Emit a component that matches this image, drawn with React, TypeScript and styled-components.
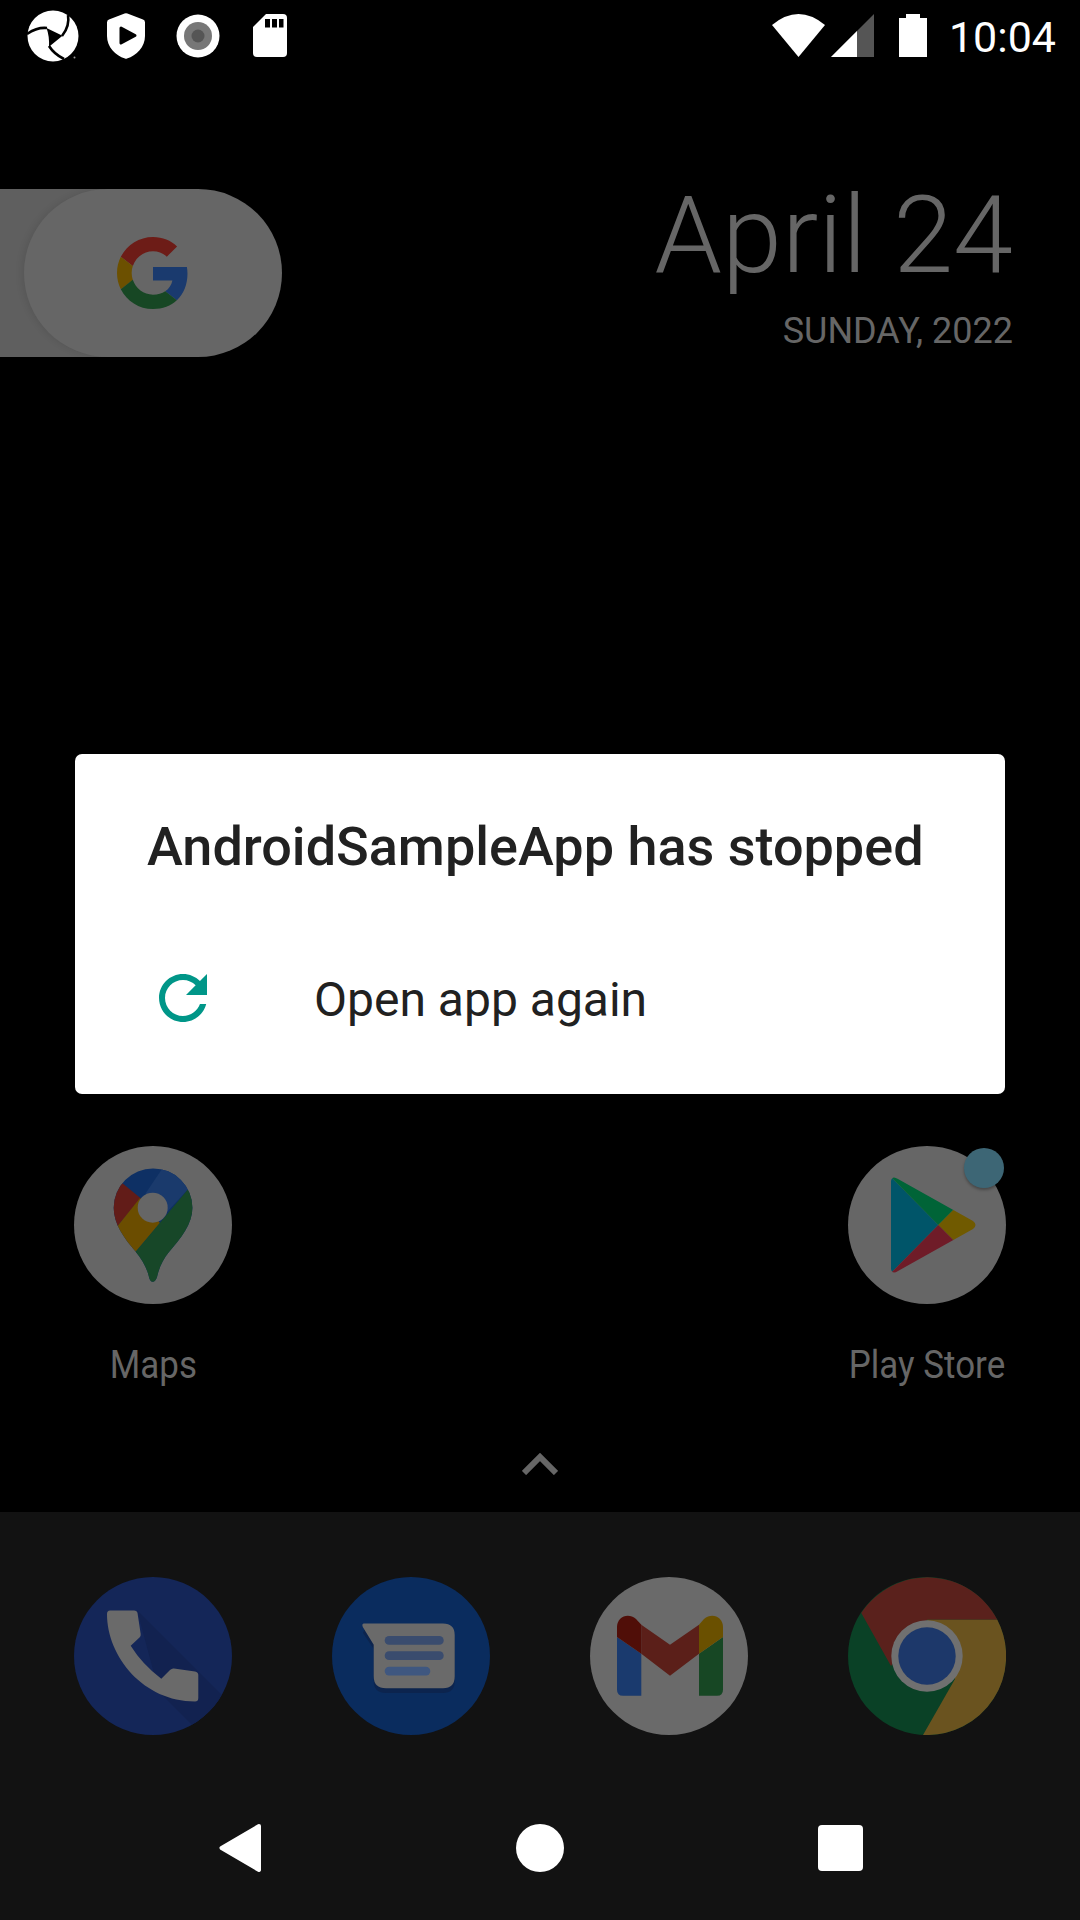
import * as React from 'react'
import styled, { createGlobalStyle } from 'styled-components'

const GlobalStyle = createGlobalStyle`
  html, body {
    margin: 0;
    padding: 0;
    background: #000;
  }
  * {
    box-sizing: border-box;
  }
`

const Page = styled.div`
  position: relative;
  width: 1080px;
  height: 1920px;
  display: flex;
  flex-direction: column;
  overflow: hidden;
  background: #000;
  font-family: Roboto, "Liberation Sans", sans-serif;
`

const StatusBar = styled.div`
  height: 71px;
  flex: none;
  display: flex;
  align-items: center;
  justify-content: space-between;
  padding: 0 24px 0 18px;
`

const StatusLeft = styled.div`
  display: flex;
  align-items: center;
`

const StatusSlot = styled.div`
  width: 72px;
  display: flex;
  justify-content: center;
  align-items: center;
`

const StatusRight = styled.div`
  display: flex;
  align-items: center;
  gap: 25px;
`

const Radios = styled.div`
  display: flex;
  align-items: center;
  gap: 6px;
`

const Clock = styled.div`
  color: #fff;
  font-size: 43px;
  line-height: 48px;
  margin: 3px 0 0 -3px;
`

const Home = styled.div`
  flex: 1;
  display: flex;
  flex-direction: column;
  min-height: 0;
`

const SearchRow = styled.div`
  margin-top: 118px;
  height: 168px;
  display: flex;
  justify-content: space-between;
  padding: 0 67px 0 24px;
  position: relative;
`

const SearchPill = styled.div`
  position: relative;
  width: 258px;
  height: 168px;
  display: flex;
  align-items: center;
  justify-content: center;
  border-radius: 84px;
  background: #666;
  box-shadow: -3px 0 6px rgba(0, 0, 0, 0.08);

  &::before {
    content: '';
    position: absolute;
    z-index: -1;
    left: -24px;
    top: 0;
    bottom: 0;
    width: 153px;
    background: #5f5f5f;
  }
`

const SearchSurface = styled.div`
  position: relative;
  z-index: 0;
`

const DateBlock = styled.div`
  display: flex;
  flex-direction: column;
  align-items: flex-end;
  margin-top: -8px;
  color: #666;
`

const DateMain = styled.div`
  font-size: 108px;
  line-height: 108px;
  font-weight: 300;
`

const DateSub = styled.div`
  font-size: 36px;
  line-height: 40px;
  margin-top: 22px;
`

const AppGrid = styled.div`
  margin-top: auto;
  display: grid;
  grid-template-columns: repeat(4, 258px);
  padding: 0 24px;
`

const AppCell = styled.div<{ $col: number }>`
  grid-column: ${(p) => p.$col};
  display: flex;
  flex-direction: column;
  align-items: center;
`

const AppLabel = styled.div`
  margin-top: 39px;
  font-size: 38px;
  line-height: 44px;
  color: #666;
  white-space: nowrap;
  transform: scaleX(0.92);
`

const Badged = styled.div`
  position: relative;
  width: 158px;
  height: 158px;
`

const Badge = styled.div`
  position: absolute;
  right: 2px;
  top: 2px;
  width: 40px;
  height: 40px;
  border-radius: 50%;
  background: #3d6675;
  box-shadow: 0 2px 3px rgba(0, 0, 0, 0.3);
`

const DrawerHint = styled.div`
  margin: 66px 0 38px;
  height: 21px;
  display: flex;
  justify-content: center;
`

const Dock = styled.div`
  flex: none;
  background: #121212;
  padding-top: 65px;
`

const DockRow = styled.div`
  display: grid;
  grid-template-columns: repeat(4, 258px);
  justify-items: center;
  padding: 0 24px 41px;
`

const NavBar = styled.div`
  height: 144px;
  display: grid;
  grid-template-columns: repeat(3, 300px);
  justify-items: center;
  align-items: center;
  padding: 0 90px;
`

const DialogLayer = styled.div`
  position: absolute;
  inset: 0 0 72px 0;
  display: flex;
  align-items: center;
  justify-content: center;
`

const Dialog = styled.div`
  width: 930px;
  height: 340px;
  background: #fff;
  border-radius: 7px;
  padding: 61px 72px 0;
  color: #212121;
`

const DialogTitle = styled.div`
  font-size: 54px;
  line-height: 64px;
  font-weight: 500;
  white-space: nowrap;
`

const DialogAction = styled.div`
  margin-top: 83px;
  height: 72px;
  display: flex;
  align-items: center;
  gap: 95px;
`

const ActionLabel = styled.div`
  font-size: 48px;
  line-height: 54px;
  margin-top: 3px;
`

const Icon = styled.svg`
  display: block;
  flex: none;
`

const ShutterLogo = () => (
  <Icon width="54" height="52" viewBox="0 0 54 52">
    <circle cx="26" cy="26" r="25.5" fill="#fff" />
    <path d="M19.5 18 L35.5 25.7 L22 36.8 Q22.5 26 19.5 18Z" fill="#000" />
    <path d="M41 5 Q43 16 35 26" fill="none" stroke="#000" strokeWidth="2.6" />
    <path d="M0 24 Q10 17 20 18" fill="none" stroke="#000" strokeWidth="2.6" />
    <path d="M22 36 Q27 44 37 49" fill="none" stroke="#000" strokeWidth="2.6" />
    <circle cx="47.5" cy="47.5" r="1" fill="#999" />
  </Icon>
)

const ShieldPlay = () => (
  <Icon width="38" height="46" viewBox="0 0 38 46">
    <path d="M17.6.6 Q19 0 20.4.6 L36 6.6 Q38 7.4 38 9.4 V23 C38 34 29.5 42.5 20 45.6 Q19 46 18 45.6 C8.5 42.5 0 34 0 23 V9.4 Q0 7.4 2 6.6Z" fill="#fff" />
    <path d="M14 15 L28 22.5 L14 30Z" fill="#000" stroke="#000" strokeWidth="3" strokeLinejoin="round" />
  </Icon>
)

const RecordDot = () => (
  <Icon width="44" height="44" viewBox="0 0 44 44">
    <circle cx="22" cy="22" r="21.5" fill="#fff" />
    <circle cx="22" cy="22" r="14" fill="#777" />
    <circle cx="22" cy="22" r="6.5" fill="#555" />
  </Icon>
)

const SdCard = () => (
  <Icon width="36" height="44" viewBox="0 0 36 44">
    <path d="M14 0 H31 Q35 0 35 4 V39 Q35 43 31 43 H5 Q1 43 1 39 V13Z" fill="#fff" />
    <path d="M13 5 H18 V13.5 H13Z M20 5 H25 V13.5 H20Z M27 5 H31.5 V13.5 H27Z" fill="#000" />
  </Icon>
)

const WifiIcon = () => (
  <Icon width="53" height="43" viewBox="0 0 53 43">
    <path d="M0 11 Q26.5 -11 53 11 L26.5 43Z" fill="#fff" />
  </Icon>
)

const SignalIcon = () => (
  <Icon width="43" height="43" viewBox="0 0 43 43">
    <path d="M0 43 L43 0 V43Z" fill="#555" />
    <path d="M0 43 L26 17 V43Z" fill="#fff" />
  </Icon>
)

const BatteryIcon = () => (
  <Icon width="28" height="43" viewBox="0 0 28 43">
    <path d="M7 0 H21 V4 H28 V43 H0 V4 H7Z" fill="#fff" />
  </Icon>
)

const GoogleG = () => (
  <Icon width="72" height="72" viewBox="0 0 48 48">
    <path fill="#6d1c17" d="M24 9.5c3.54 0 6.71 1.22 9.21 3.6l6.85-6.85C35.9 2.38 30.47 0 24 0 14.62 0 6.51 5.38 2.56 13.22l7.98 6.19C12.43 13.72 17.74 9.5 24 9.5z" />
    <path fill="#1a3a6e" d="M46.98 24.55c0-1.57-.15-3.09-.38-4.55H24v9.02h12.94c-.58 2.96-2.26 5.48-4.78 7.18l7.73 6c4.51-4.18 7.09-10.36 7.09-17.65z" />
    <path fill="#6c5000" d="M10.53 28.59c-.48-1.45-.76-2.99-.76-4.59s.27-3.14.76-4.59l-7.98-6.19C.92 16.46 0 20.12 0 24c0 3.88.92 7.54 2.56 10.78l7.97-6.19z" />
    <path fill="#174724" d="M24 48c6.48 0 11.93-2.13 15.89-5.81l-7.73-6c-2.15 1.45-4.92 2.3-8.16 2.3-6.26 0-11.57-4.22-13.47-9.91l-7.98 6.19C6.51 42.62 14.62 48 24 48z" />
  </Icon>
)

const MapsIcon = () => (
  <Icon width="158" height="158" viewBox="0 0 158 158">
    <defs>
      <clipPath id="pin">
        <path d="M79 22.4 A39.3 39.3 0 0 1 118.4 61.7 C118.4 78 107 92 95 106 C89 113 85 122 83 131 Q81.5 135.7 78.7 135.7 Q76 135.7 75 131 C73 122 68 113 61.7 105.7 C50 92 39.7 78 39.7 61.7 A39.3 39.3 0 0 1 79 22.4Z" />
      </clipPath>
    </defs>
    <circle cx="79" cy="79" r="79" fill="#666" />
    <g clipPath="url(#pin)">
      <rect x="30" y="15" width="100" height="130" fill="#0e3064" />
      <path d="M90 20 L130 20 L130 44 L113.4 44 L80 80 L71.7 47.3Z" fill="#1a3a6c" />
      <path d="M48.4 37.3 L66.7 52.3 L43 80.7 L30 70 L30 30Z" fill="#621c18" />
      <path d="M43 80.7 L66 52 L86 77 L61.7 105.7 L40 90Z" fill="#6b4d00" />
      <path d="M61.7 105.7 L113.4 44 L130 44 L130 145 L60 145Z" fill="#174728" />
    </g>
    <circle cx="78.7" cy="61.7" r="15" fill="#666" />
  </Icon>
)

const PlayIcon = () => (
  <Icon width="158" height="158" viewBox="0 0 158 158">
    <defs>
      <clipPath id="play">
        <path d="M43 35 Q44 29 50 33 L125 75 Q130 79 125 83 L50 125 Q44 129 43 123Z" />
      </clipPath>
    </defs>
    <circle cx="79" cy="79" r="79" fill="#666" />
    <g clipPath="url(#play)">
      <path d="M40 28 L90.3 79 L40 130Z" fill="#005569" />
      <path d="M40 28 L110 28 L106 63.3 L90.3 79Z" fill="#006437" />
      <path d="M106 63.3 L135 79 L106 94.7 L90.3 79Z" fill="#705a00" />
      <path d="M40 130 L90.3 79 L106 94.7 L110 130Z" fill="#6f1c28" />
    </g>
  </Icon>
)

const PhoneIcon = () => (
  <Icon width="158" height="158" viewBox="0 0 158 158">
    <defs>
      <clipPath id="phoneClip">
        <circle cx="79" cy="79" r="79" />
      </clipPath>
    </defs>
    <circle cx="79" cy="79" r="79" fill="#142658" />
    <path d="M63 33 L170 140 L140 170 L85 115Z" fill="#122250" clipPath="url(#phoneClip)" />
    <path d="M36 33.5 H60 Q63 33.5 63.5 36 L66.7 57 Q67 59 65.5 60.5 L56.7 68.7 Q68 87 87.3 101.7 L96 93 Q98 91 100 91.5 L121 94.5 Q124.3 95 124.3 98 V121 Q124.3 124.5 121 124.5 C70 124.5 33 80 33 37 Q33 33.5 36 33.5Z" fill="#6a6a6a" />
  </Icon>
)

const MessagesIcon = () => (
  <Icon width="158" height="158" viewBox="0 0 158 158">
    <circle cx="79" cy="79" r="79" fill="#0a2c5e" />
    <path d="M33 51 L111 51 Q122.7 51 122.7 63 V104 Q122.7 116 111 116 H54 Q41.7 116 41.7 104 V72 L31 56Z" fill="#0c244e" />
    <path d="M32 46.4 H111 Q122.7 46.4 122.7 58 V99.3 Q122.7 111.3 111 111.3 H54 Q41.7 111.3 41.7 99.3 V67.7 L30.8 50 Q29.5 46.4 32 46.4Z" fill="#6a6a6a" />
    <rect x="52.7" y="59" width="59" height="8.7" rx="4.3" fill="#3a4c6e" />
    <rect x="52.7" y="74.3" width="59" height="8.7" rx="4.3" fill="#3a4c6e" />
    <rect x="52.7" y="89.7" width="45.6" height="8.7" rx="4.3" fill="#3f5780" />
  </Icon>
)

const GmailIcon = () => (
  <Icon width="158" height="158" viewBox="0 0 158 158">
    <circle cx="79" cy="79" r="79" fill="#6a6a6a" />
    <path d="M27 60 L51.3 76.7 V118.7 H33 Q27 118.7 27 112.7Z" fill="#1a3a6e" />
    <path d="M133 60 L109 76.7 V118.7 H127 Q133 118.7 133 112.7Z" fill="#174724" />
    <path d="M51.3 47.7 L80 67.7 L109 47.7 V76.7 L80 98.7 L51.3 76.7Z" fill="#5b1f19" />
    <path d="M27 60 V50 C27 40 38 35 46 42 L51.3 47.7 V76.7Z" fill="#500e08" />
    <path d="M133 60 V50 C133 40 122 35 114 42 L109 47.7 V76.7Z" fill="#6a5000" />
  </Icon>
)

const ChromeIcon = () => (
  <Icon width="158" height="158" viewBox="0 0 158 158">
    <circle cx="79" cy="79" r="79" fill="#0a4126" />
    <path d="M13.3 36 A79 79 0 0 1 149.3 42.7 L79 42.7 L43 89Z" fill="#5a211c" />
    <path d="M149.3 42.7 A79 79 0 0 1 75 157.9 L107 102 L79 42.7Z" fill="#6a531f" />
    <circle cx="79" cy="79" r="35.7" fill="#707070" />
    <circle cx="79" cy="79" r="28.7" fill="#1d386a" />
  </Icon>
)

const BackIcon = () => (
  <Icon width="42" height="50" viewBox="0 0 42 50">
    <path d="M40 3 L2.5 25 L40 47Z" fill="#fff" stroke="#fff" strokeWidth="4" strokeLinejoin="round" />
  </Icon>
)

const HomeDot = styled.div`
  width: 48px;
  height: 48px;
  border-radius: 50%;
  background: #fff;
`

const RecentsSquare = styled.div`
  width: 45px;
  height: 46px;
  border-radius: 4px;
  background: #fff;
`

const ChevronUp = () => (
  <Icon width="36" height="22" viewBox="0 0 36 22">
    <path d="M2 20 L18 4 L34 20" fill="none" stroke="#666" strokeWidth="6" />
  </Icon>
)

const RefreshIcon = () => (
  <Icon width="72" height="72" viewBox="0 0 24 24">
    <path d="M17.65 6.35C16.2 4.9 14.21 4 12 4c-4.42 0-7.99 3.58-7.99 8s3.57 8 7.99 8c3.73 0 6.84-2.55 7.73-6h-2.08c-.82 2.33-3.04 4-5.65 4-3.31 0-6-2.69-6-6s2.69-6 6-6c1.66 0 3.14.69 4.22 1.78L13 11h7V4l-2.35 2.35z" fill="#009688" />
  </Icon>
)

export default function App() {
  return (
    <Page>
      <GlobalStyle />
      <StatusBar>
        <StatusLeft>
          <StatusSlot><ShutterLogo /></StatusSlot>
          <StatusSlot><ShieldPlay /></StatusSlot>
          <StatusSlot><RecordDot /></StatusSlot>
          <StatusSlot><SdCard /></StatusSlot>
        </StatusLeft>
        <StatusRight>
          <Radios>
            <WifiIcon />
            <SignalIcon />
          </Radios>
          <BatteryIcon />
          <Clock>10:04</Clock>
        </StatusRight>
      </StatusBar>
      <Home>
        <SearchRow>
          <SearchSurface>
            <SearchPill>
              <GoogleG />
            </SearchPill>
          </SearchSurface>
          <DateBlock>
            <DateMain>April 24</DateMain>
            <DateSub>SUNDAY, 2022</DateSub>
          </DateBlock>
        </SearchRow>
        <AppGrid>
          <AppCell $col={1}>
            <MapsIcon />
            <AppLabel>Maps</AppLabel>
          </AppCell>
          <AppCell $col={4}>
            <Badged>
              <PlayIcon />
              <Badge />
            </Badged>
            <AppLabel>Play Store</AppLabel>
          </AppCell>
        </AppGrid>
        <DrawerHint>
          <ChevronUp />
        </DrawerHint>
      </Home>
      <Dock>
        <DockRow>
          <PhoneIcon />
          <MessagesIcon />
          <GmailIcon />
          <ChromeIcon />
        </DockRow>
        <NavBar>
          <BackIcon />
          <HomeDot />
          <RecentsSquare />
        </NavBar>
      </Dock>
      <DialogLayer>
        <Dialog>
          <DialogTitle>AndroidSampleApp has stopped</DialogTitle>
          <DialogAction>
            <RefreshIcon />
            <ActionLabel>Open app again</ActionLabel>
          </DialogAction>
        </Dialog>
      </DialogLayer>
    </Page>
  )
}
